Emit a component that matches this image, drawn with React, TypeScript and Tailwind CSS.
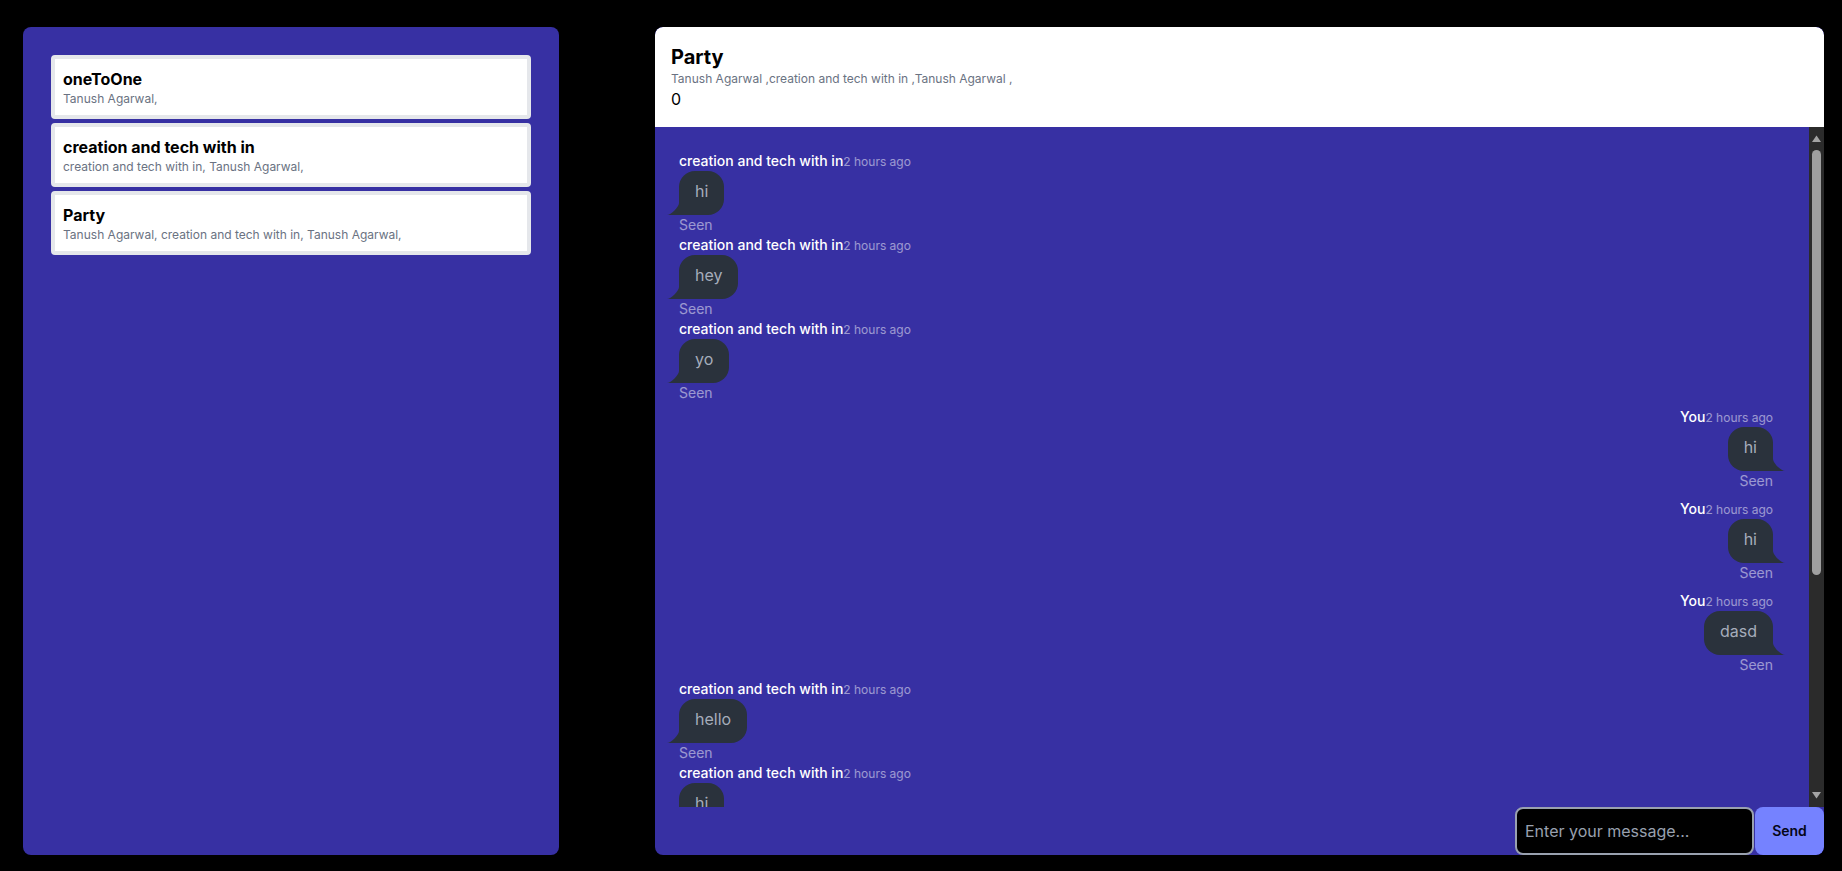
import React from "react";

type Chat = { id: number; name: string; users: string };
type Message = { id: number; sender: string; text: string; mine: boolean };

const chats: Chat[] = [
    { id: 1, name: "oneToOne", users: "Tanush Agarwal," },
    { id: 2, name: "creation and tech with in", users: "creation and tech with in, Tanush Agarwal," },
    { id: 3, name: "Party", users: "Tanush Agarwal, creation and tech with in, Tanush Agarwal," },
];

const messages: Message[] = [
    { id: 1, sender: "creation and tech with in", text: "hi", mine: false },
    { id: 2, sender: "creation and tech with in", text: "hey", mine: false },
    { id: 3, sender: "creation and tech with in", text: "yo", mine: false },
    { id: 4, sender: "You", text: "hi", mine: true },
    { id: 5, sender: "You", text: "hi", mine: true },
    { id: 6, sender: "You", text: "dasd", mine: true },
    { id: 7, sender: "creation and tech with in", text: "hello", mine: false },
    { id: 8, sender: "creation and tech with in", text: "hi", mine: false },
    { id: 9, sender: "You", text: "hello", mine: true },
    { id: 10, sender: "You", text: "sup", mine: true },
    { id: 11, sender: "creation and tech with in", text: "nothing", mine: false },
];

const Bubble: React.FC<{ text: string; mine: boolean }> = ({ text, mine }) => (
    <div
        className={`relative min-h-11 min-w-11 px-4 py-2 text-base leading-6 bg-[#2a323c] text-[#a6adbb] rounded-2xl ${
            mine ? "rounded-br-none" : "rounded-bl-none"
        }`}
    >
        {text}
        {/* bubble tail */}
        <svg
            className={`absolute bottom-0 w-3 h-3 ${mine ? "-right-3" : "-left-3"}`}
            viewBox="0 0 3 3"
        >
            <path
                fill="#2a323c"
                d={mine ? "M0 3 L1 3 L3 3 C2 3 0 1 0 0 Z" : "M0 3 L3 3 L3 0 C3 1 1 3 0 3 Z"}
            />
        </svg>
    </div>
);

const ChatMessage: React.FC<{ msg: Message }> = ({ msg }) => (
    <div className={`flex flex-col ${msg.mine ? "items-end py-1" : "items-start"}`}>
        <div className="text-sm leading-5 text-white">
            <span className="font-medium">{msg.sender}</span>
            <time className="text-xs opacity-50">2 hours ago</time>
        </div>
        <Bubble text={msg.text} mine={msg.mine} />
        <div className="text-sm leading-5 text-white opacity-50">Seen</div>
    </div>
);

// classic scrollbar look for the message list
const ScrollBar: React.FC = () => (
    <div className="w-[15px] shrink-0 bg-[#2b2b2b] flex flex-col items-center">
        <svg width="15" height="15" viewBox="0 0 15 15">
            <path d="M3 15 L12 15 L7.5 8.5 Z" fill="#a3a3a3" />
        </svg>
        <div className="mt-2 w-[9px] h-[425px] rounded-full bg-[#9f9f9f]" />
        <div className="flex-1" />
        <svg width="15" height="15" viewBox="0 0 15 15">
            <path d="M3 0 L12 0 L7.5 6.5 Z" fill="#a3a3a3" />
        </svg>
    </div>
);

export default function App() {
    return (
        <div className="flex min-h-screen bg-black pt-[27px] pl-[23px] pr-[18px] pb-4 gap-[96px] font-['Inter',sans-serif]">
            {/* Sidebar */}
            <div className="w-[536px] h-[828px] shrink-0 bg-[#3730a3] rounded-lg p-7">
                <div className="flex flex-col gap-1">
                    {chats.map((chat) => (
                        <div key={chat.id} className="bg-white border-4 border-gray-200 rounded-sm p-2">
                            <div className="text-base leading-6 font-bold text-black">{chat.name}</div>
                            <div className="text-xs leading-4 text-gray-500">{chat.users}</div>
                        </div>
                    ))}
                </div>
            </div>

            {/* Chat window */}
            <div className="flex-1 h-[828px] flex flex-col bg-[#3730a3] rounded-lg overflow-hidden">
                <div className="bg-white px-4 py-4 rounded-t-lg">
                    <h2 className="text-xl leading-7 font-bold text-black">Party</h2>
                    <p className="text-xs leading-4 text-gray-500">
                        Tanush Agarwal ,creation and tech with in ,Tanush Agarwal ,
                    </p>
                    <p className="text-base leading-6 text-black">0</p>
                </div>

                <div className="flex-1 min-h-0 flex">
                    <div className="flex-1 min-w-0 overflow-hidden pt-6 pl-6 pr-9">
                        {messages.map((msg) => (
                            <ChatMessage key={msg.id} msg={msg} />
                        ))}
                    </div>
                    <ScrollBar />
                </div>

                <div className="flex justify-end h-12">
                    <input
                        type="text"
                        placeholder="Enter your message..."
                        className="w-[239px] h-12 bg-black border-2 border-gray-400 rounded-lg px-2 text-base text-white placeholder:text-gray-400 outline-none"
                    />
                    <button className="ml-px w-[69px] h-12 bg-[#7582ff] text-[#050617] text-sm font-semibold rounded-lg">
                        Send
                    </button>
                </div>
            </div>
        </div>
    );
}
